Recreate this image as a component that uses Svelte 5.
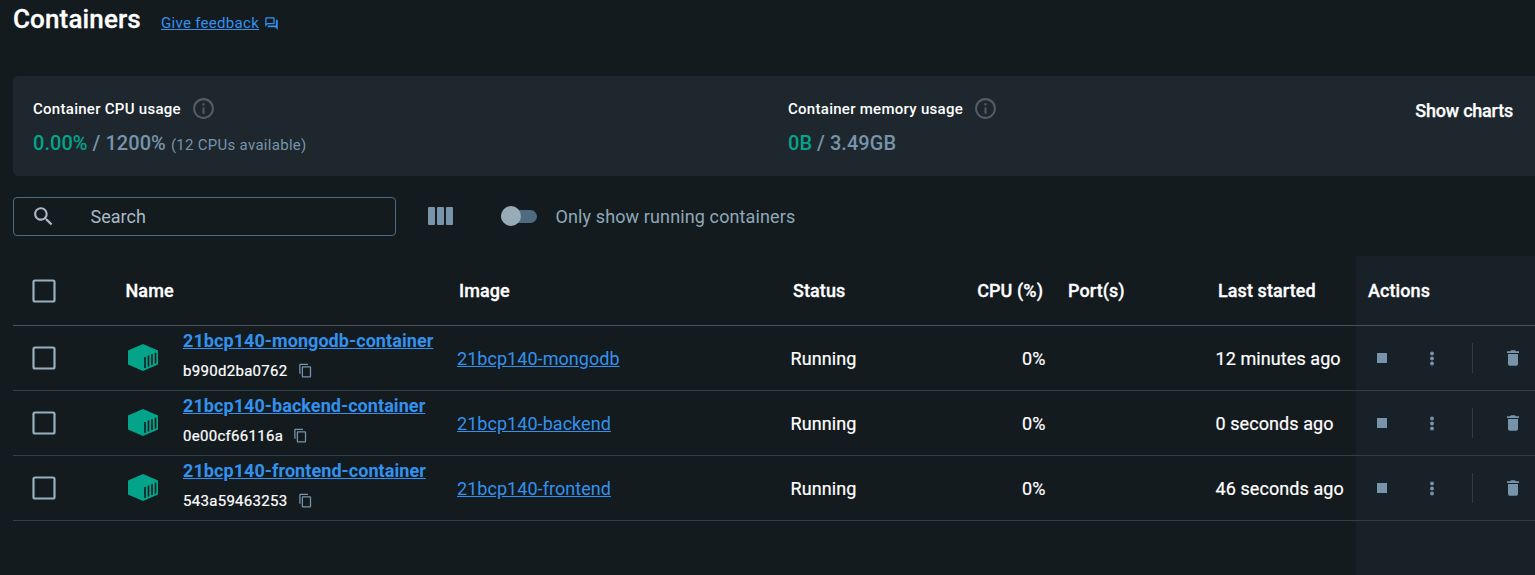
<script>
  const rows = [
    { name: '21bcp140-mongodb-container', id: 'b990d2ba0762', image: '21bcp140-mongodb', started: '12 minutes ago' },
    { name: '21bcp140-backend-container', id: '0e00cf66116a', image: '21bcp140-backend', started: '0 seconds ago' },
    { name: '21bcp140-frontend-container', id: '543a59463253', image: '21bcp140-frontend', started: '46 seconds ago' }
  ];
</script>

{#snippet info()}
  <svg class="info" width="25" height="25" viewBox="0 0 24 24"><path d="M11 7h2v2h-2zm0 4h2v6h-2zm1-9C6.480 2 2 6.480 2 12s4.480 10 10 10 10-4.480 10-10S17.520 2 12 2zm0 18c-4.410 0-8-3.590-8-8s3.590-8 8-8 8 3.590 8 8-3.590 8-8 8z" /></svg>
{/snippet}

{#snippet checkbox()}
  <svg class="check" width="24" height="24" viewBox="0 0 24 24"><rect x="1.500" y="1.500" width="21" height="21" rx="1.500" fill="none" stroke="currentColor" stroke-width="2.200" /></svg>
{/snippet}

<main>
  <header>
    <h1>Containers</h1>
    <a class="feedback" href="#feedback">Give feedback</a>
    <svg class="forum" width="15" height="15" viewBox="0 0 24 24"><path d="M15 4v7H5.170L4 12.170V4h11m1-2H3c-.550 0-1 .450-1 1v14l4-4h10c.550 0 1-.450 1-1V3c0-.550-.450-1-1-1zm5 4h-2v9H6v2c0 .550.450 1 1 1h11l4 4V7c0-.550-.450-1-1-1z" /></svg>
  </header>

  <section class="usage">
    <div class="metric cpu">
      <div class="label"><span>Container CPU usage</span>{@render info()}</div>
      <div class="value"><b>0.00%</b> / 1200% <small>(12 CPUs available)</small></div>
    </div>
    <div class="metric">
      <div class="label mem"><span>Container memory usage</span>{@render info()}</div>
      <div class="value"><b>0B</b> / 3.49GB</div>
    </div>
    <button class="charts">Show charts</button>
  </section>

  <section class="tools">
    <label class="search">
      <svg width="25" height="25" viewBox="0 0 24 24"><path d="M15.500 14h-.790l-.280-.270C15.410 12.590 16 11.110 16 9.500 16 5.910 13.090 3 9.500 3S3 5.910 3 9.500 5.910 16 9.500 16c1.610 0 3.090-.590 4.230-1.570l.270.280v.790l5 4.990L20.490 19l-4.990-5zm-6 0C7.010 14 5 11.990 5 9.500S7.010 5 9.500 5 14 7.010 14 9.500 11.990 14 9.500 14z" /></svg>
      <span>Search</span>
    </label>
    <div class="columns"><i></i><i></i><i></i></div>
    <div class="switch"><i></i></div>
    <span class="only">Only show running containers</span>
  </section>

  <section class="table">
    <div class="row head">
      <div class="cell sel">{@render checkbox()}</div>
      <div class="cell">Name</div>
      <div class="cell">Image</div>
      <div class="cell">Status</div>
      <div class="cell num">CPU (%)</div>
      <div class="cell ports">Port(s)</div>
      <div class="cell">Last started</div>
      <div class="cell act">Actions</div>
    </div>
    {#each rows as row}
      <div class="row body">
        <div class="cell sel">{@render checkbox()}</div>
        <div class="cell name">
          <svg class="cube" width="30" height="27" viewBox="0 0 30 27">
            <path fill="#04a48b" d="M15 0 30 6.500v14L15 27 0 20.500v-14z" />
            <path stroke="#141b1f" stroke-width="1.600" d="M17 13v11M20.500 11.600v10.900M24 10.200v10.800M27.500 8.800v10.700" />
          </svg>
          <div class="ident">
            <a href="#container">{row.name}</a>
            <div class="id">
              <span>{row.id}</span>
              <svg width="15" height="15" viewBox="0 0 24 24"><path d="M16 1H4c-1.100 0-2 .900-2 2v14h2V3h12V1zm3 4H8c-1.100 0-2 .900-2 2v14c0 1.100.900 2 2 2h11c1.100 0 2-.900 2-2V7c0-1.100-.900-2-2-2zm0 16H8V7h11v14z" /></svg>
            </div>
          </div>
        </div>
        <div class="cell link"><a href="#image">{row.image}</a></div>
        <div class="cell strong">Running</div>
        <div class="cell strong num">0%</div>
        <div class="cell ports"></div>
        <div class="cell strong">{row.started}</div>
        <div class="cell act">
          <i class="stop"></i>
          <svg class="dots" width="4" height="15" viewBox="0 0 4 15"><circle cx="2" cy="2.500" r="1.900" /><circle cx="2" cy="7.500" r="1.900" /><circle cx="2" cy="12.500" r="1.900" /></svg>
          <i class="rule"></i>
          <svg class="trash" width="12" height="16" viewBox="0 0 12 16"><path d="M0 1.200h3.200L4 .300h4l.800.900H12v1.700H0zM1 4h10v10q0 1.700-1.700 1.700H2.700Q1 15.700 1 14z" /></svg>
        </div>
      </div>
    {/each}
    <div class="rest"></div>
  </section>
</main>

<style>
  :global(body) { margin: 0; background: #141b1f; }
  main {
    box-sizing: border-box; width: 1535px; height: 575px; padding-left: 13px; overflow: hidden;
    display: flex; flex-direction: column;
    font-family: Roboto, sans-serif; font-size: 18px; color: #fff; background: #141b1f;
  }
  svg { display: block; flex: none; fill: currentColor; }
  a { color: #3391ee; text-decoration: underline; }
  header { display: flex; height: 76px; align-items: flex-start; }
  h1 { margin: 4px 0 0; width: 148px; font-size: 26px; line-height: 30px; font-weight: 500; letter-spacing: 0.130px; -webkit-text-stroke: 0.300px; }
  .feedback { margin-top: 13px; width: 98px; font-size: 15px; line-height: 20px; letter-spacing: 0.300px; white-space: nowrap; text-underline-offset: 1px; }
  .forum { margin: 16px 0 0 5px; color: #3391ee; }

  .usage { display: flex; height: 100px; box-sizing: border-box; padding: 20px 22px 0 20px; background: #1d272d; border-radius: 5px 0 0 5px; }
  .metric { flex: 1; }
  .cpu { flex: none; width: 755px; }
  .label { display: flex; align-items: center; gap: 10px; height: 25px; font-size: 15px; font-weight: 500; letter-spacing: 0.280px; }
  .info { color: #545d67; }
  .value { margin-top: 10px; line-height: 25px; font-size: 20px; font-weight: 500; color: #7794ab; letter-spacing: 0.040px; }
  .value b { font-weight: 500; color: #04a48b; }
  .value small { font-size: 15px; font-weight: 400; letter-spacing: 0.290px; }
  .charts { align-self: flex-start; margin: 3px 0 0; padding: 0; border: 0; background: none; color: #fff; font: 500 18px/24px Roboto, sans-serif; letter-spacing: -0.220px; -webkit-text-stroke: 0.250px; }

  .tools { display: flex; align-items: center; height: 80px; color: #8fa8b8; }
  .search { box-sizing: border-box; width: 383px; height: 39px; display: flex; align-items: center; gap: 35px; padding-left: 16.500px; border: 1px solid #4d6b80; border-radius: 4px; color: #a9bac6; }
  .columns { display: flex; gap: 2px; margin-left: 32px; }
  .columns i { width: 7px; height: 18px; border-radius: 1px; background: #7794ab; }
  .switch { display: flex; align-items: center; margin-left: 48px; width: 36px; height: 13px; border-radius: 7px; background: #4d6a80; }
  .switch i { width: 20px; height: 20px; border-radius: 50%; background: #98abb9; }
  .only { margin-left: 18.500px; letter-spacing: 0.120px; }

  .table { flex: 1; display: flex; flex-direction: column; }
  .row { display: grid; grid-template-columns: 112.500px 333.500px 334px 150px 100px 175px 138px 179px; height: 65px; box-sizing: border-box; border-bottom: 1px solid #2b3f4c; }
  .head { height: 70px; border-color: #4c5257; font-weight: 500; letter-spacing: 0.080px; -webkit-text-stroke: 0.300px; }
  .body { grid-template-columns: 115px 329px 333.500px 150px 105px 170px 140.500px 179px; letter-spacing: 0.080px; }
  .cell { display: flex; align-items: center; white-space: nowrap; }
  .strong { -webkit-text-stroke: 0.200px; }
  .link { letter-spacing: 0.050px; }
  .sel { padding-left: 19px; }
  .check { color: #98afbf; }
  .num { justify-content: flex-end; }
  .ports { padding-left: 25px; }
  .name { gap: 25px; }
  .cube { margin-top: -1px; }
  .ident { line-height: 20px; margin-top: -4px; }
  .ident a { font-weight: 700; letter-spacing: 0.070px; }
  .id { display: flex; align-items: center; gap: 10px; height: 20px; margin-top: 10px; font-size: 15px; letter-spacing: 0.300px; -webkit-text-stroke: 0.200px; }
  .id svg { color: #7794ab; margin-top: -2px; }
  .act { background: #192128; }
  .head .act { padding-left: 12px; }
  .body .act { padding-left: 21px; color: #7794ab; }
  .stop { width: 10px; height: 10px; background: #7794ab; }
  .dots { margin-left: 43px; }
  .rule { width: 1px; height: 30px; margin-left: 38px; background: #323b45; }
  .trash { margin-left: 34px; }
  .rest { flex: 1; margin-left: 1343px; background: #192128; }
</style>
